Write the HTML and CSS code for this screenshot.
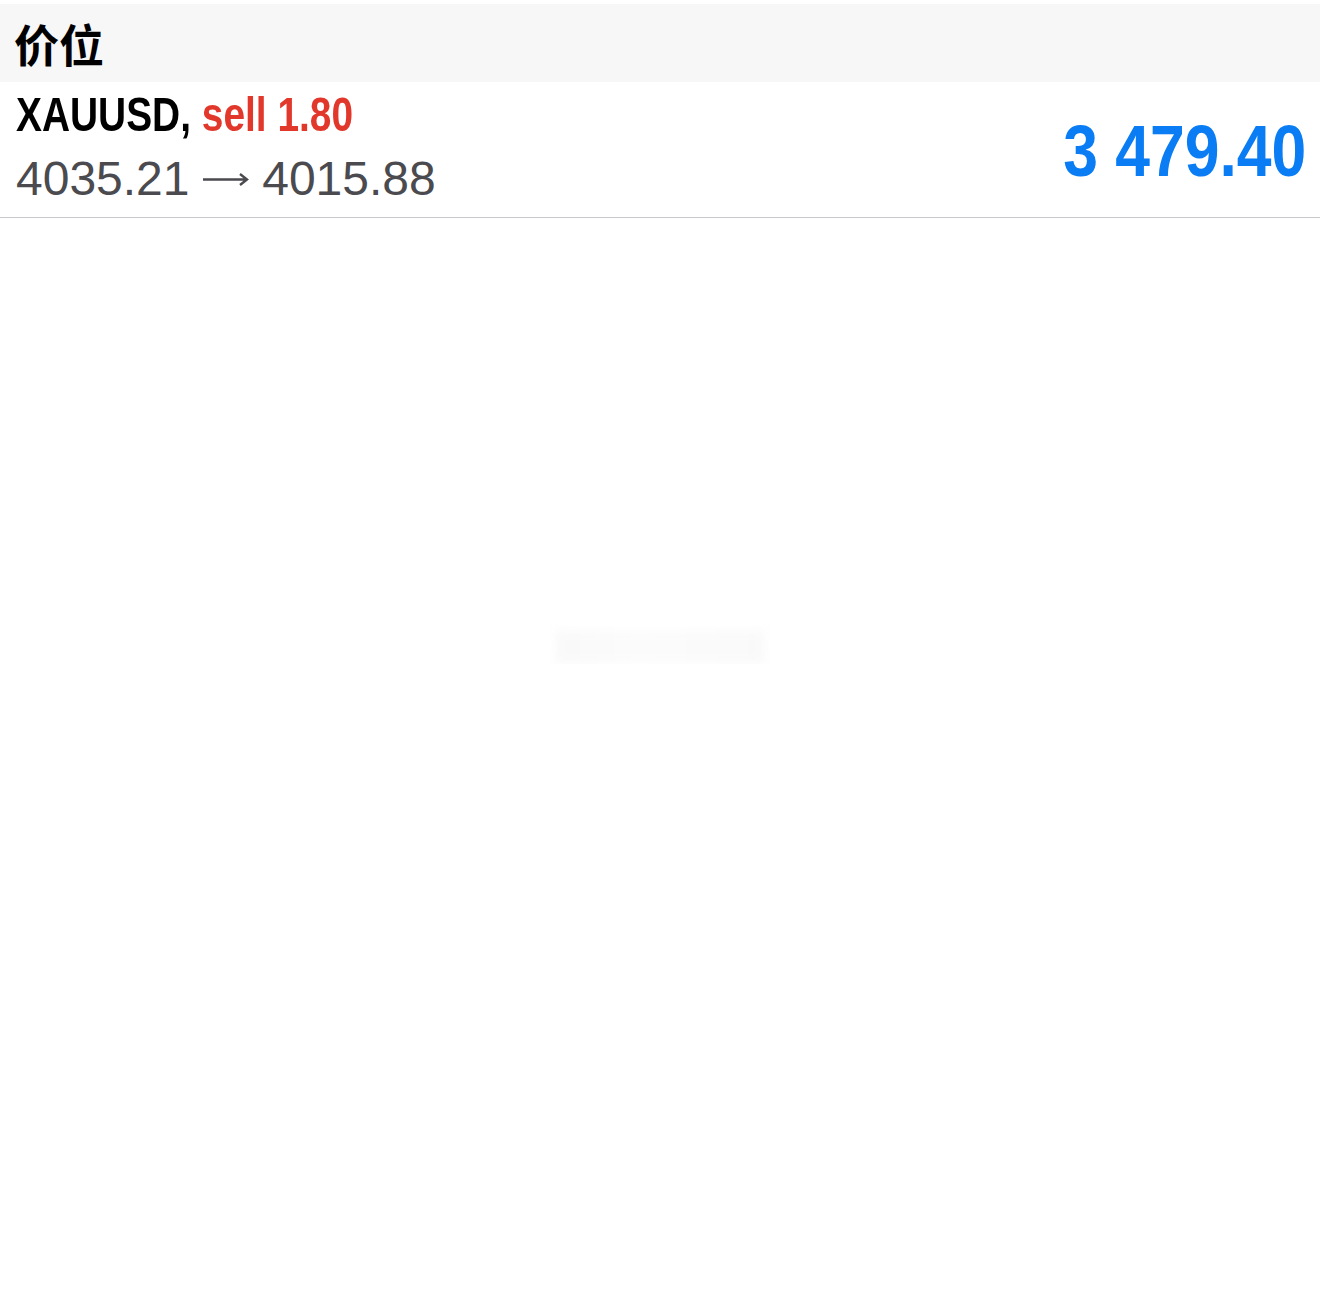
FILE: index.html
```html
<!DOCTYPE html>
<html lang="zh">
<head>
  <meta charset="UTF-8">
  <meta name="viewport" content="width=device-width, initial-scale=1.0">
  <title>价位</title>
  <link rel="stylesheet" href="styles.css">
</head>
<body>
  <div class="list">
    <!-- section header -->
    <div class="section-header">价位</div>

    <!-- open position -->
    <div class="position">
      <div class="position-info">
        <div class="position-title"><span class="narrow">XAUUSD, <span class="sell">sell 1.80</span></span></div>
        <div class="position-prices">4035.21
          <svg class="arrow" width="48" height="20" viewBox="0 0 48 20"><path d="M1 10.5H45M38 5l7 5.5-7 5.5" fill="none" stroke="#4a4a4f" stroke-width="2.4"/></svg>
          4015.88</div>
      </div>
      <div class="position-profit"><span class="narrow right">3 479.40</span></div>
    </div>
  </div>
  <div class="watermark"></div>
</body>
</html>
```

FILE: styles.css
```css
body {
  margin: 0;
  padding-top: 4px;
  background-color: #ffffff;
  font-family: "Liberation Sans", Arial, "Noto Sans CJK SC", sans-serif;
}
.section-header {
  background-color: #f7f7f7;
  height: 78px;
  padding: 0 14px;
  display: flex;
  align-items: center;
  font-family: "Noto Sans CJK SC", sans-serif;
  font-weight: bold;
  font-size: 45px;
  color: #000;
}
.position {
  display: flex;
  justify-content: space-between;
  align-items: center;
  height: 135px;
  padding: 0 14px 0 16px;
  border-bottom: 1px solid #c8c8cc;
}
.narrow {
  display: inline-block;
  transform: scaleX(0.81);
  transform-origin: left center;
  white-space: nowrap;
}
.narrow.right {
  transform: scaleX(0.855);
  transform-origin: right center;
}
.position-title {
  font-weight: bold;
  font-size: 48px;
  line-height: 56px;
  color: #000;
  margin-top: -3px;
  white-space: nowrap;
}
.sell {
  color: #e2382b;
}
.position-prices {
  font-size: 48px;
  line-height: 60px;
  color: #4a4a4f;
  margin-top: 6px;
  white-space: nowrap;
}
.arrow {
  vertical-align: 6px;
  margin: 0 -1px;
}
.position-profit {
  font-weight: bold;
  font-size: 73px;
  color: #0a7cf4;
  margin-top: 2px;
}
.watermark {
  width: 210px;
  height: 34px;
  margin: 412px auto 0;
  background: linear-gradient(90deg, #f4f4f4, #f9f9f9 40%, #f5f5f5);
  filter: blur(4px);
  opacity: 0.5;
}
```
